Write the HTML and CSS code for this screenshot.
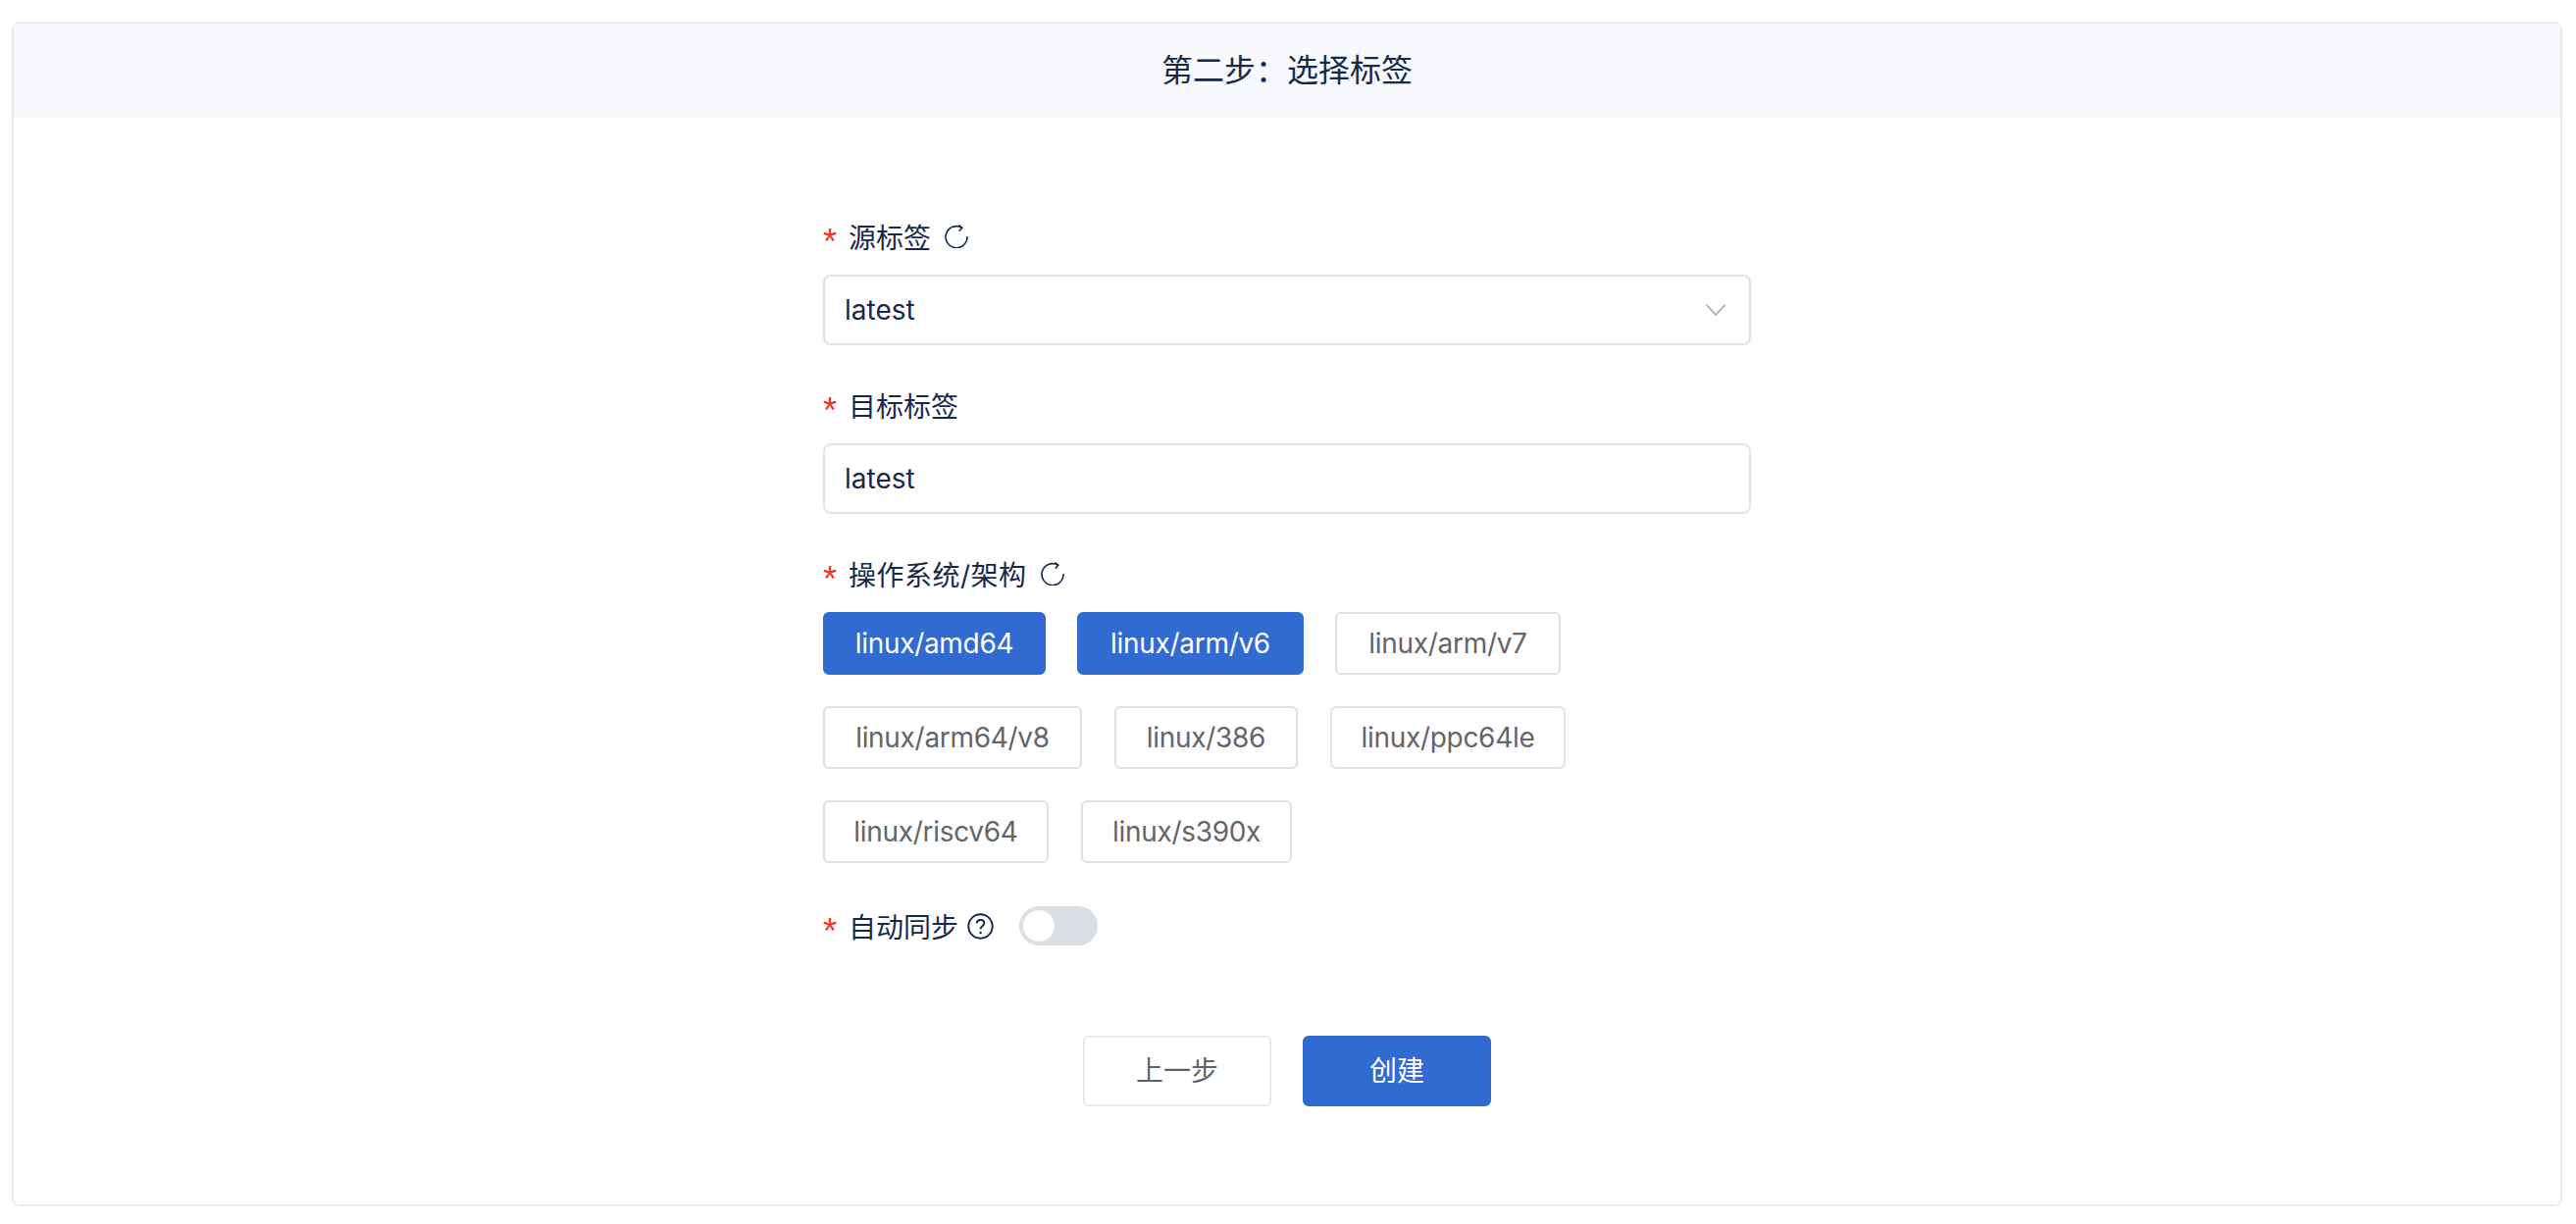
FILE: index.html
```html
<!DOCTYPE html>
<html lang="zh-CN">
<head>
  <meta charset="UTF-8">
  <title>选择标签</title>
  <link rel="stylesheet" href="styles.css">
</head>
<body>
  <div class="card">
    <div class="card-title">第二步：选择标签</div>

    <div class="form">
      <div class="form-label">
        <span class="required">*</span>
        <span>源标签</span>
        <svg class="refresh" viewBox="0 0 24 24"><path d="M17.6 3.2A11 11 0 1 0 23 12"/><path d="M14.2 .6l3.6 2.6-3 3.4"/></svg>
      </div>
      <div class="input select">
        <span>latest</span>
        <svg class="chevron" viewBox="0 0 20 12"><path d="M.5 .7L10 11 19.5 .7"/></svg>
      </div>

      <div class="form-label">
        <span class="required">*</span>
        <span>目标标签</span>
      </div>
      <div class="input">latest</div>

      <div class="form-label">
        <span class="required">*</span>
        <span class="label-wide">操作系统/架构</span>
        <svg class="refresh" viewBox="0 0 24 24"><path d="M17.6 3.2A11 11 0 1 0 23 12"/><path d="M14.2 .6l3.6 2.6-3 3.4"/></svg>
      </div>
      <div class="arch-list">
        <div class="arch-row row-1">
          <div class="arch active">linux/amd64</div>
          <div class="arch active">linux/arm/v6</div>
          <div class="arch">linux/arm/v7</div>
        </div>
        <div class="arch-row row-2">
          <div class="arch">linux/arm64/v8</div>
          <div class="arch">linux/386</div>
          <div class="arch">linux/ppc64le</div>
        </div>
        <div class="arch-row row-3">
          <div class="arch">linux/riscv64</div>
          <div class="arch">linux/s390x</div>
        </div>
      </div>

      <div class="sync-row">
        <span class="required">*</span>
        <span>自动同步</span>
        <svg class="help" viewBox="0 0 27 27"><circle cx="13.5" cy="13.5" r="12.2"/><path d="M9.8 10.6c0-2.2 1.6-3.6 3.8-3.6s3.7 1.3 3.7 3.3c0 3-3.7 2.9-3.7 6"/><circle class="dot" cx="13.6" cy="20" r="1.3"/></svg>
        <div class="switch"><div class="knob"></div></div>
      </div>

      <div class="actions">
        <div class="btn">上一步</div>
        <div class="btn primary">创建</div>
      </div>
    </div>
  </div>
</body>
</html>
```

FILE: styles.css
```css
* {
  box-sizing: border-box;
}

body {
  margin: 0;
  padding: 22px 14px 18px 12px;
  background: #fff;
  color: #14294b;
  font-family: Inter, "Noto Sans CJK SC", sans-serif;
  font-size: 28px;
}

.card {
  height: 1208px;
  border: 2px solid #e9ecf2;
  border-radius: 8px;
}

.card-title {
  height: 96px;
  line-height: 96px;
  text-align: center;
  font-size: 32px;
  background: #f7f9fd;
}

.form {
  width: 946px;
  margin: 0 auto;
  padding-top: 101px;
}

.form-label {
  display: flex;
  align-items: center;
  height: 40px;
  margin-bottom: 19px;
}

.label-wide {
  letter-spacing: 0.5px;
}

.required {
  width: 26px;
  padding-top: 11px;
  color: #f5332a;
  font-family: "Liberation Sans", sans-serif;
  font-size: 36px;
  line-height: 1;
}

.refresh {
  width: 24px;
  height: 24px;
  margin-left: 14px;
  fill: none;
  stroke: #14294b;
  stroke-width: 1.6;
}

.input {
  display: flex;
  align-items: center;
  justify-content: space-between;
  height: 72px;
  margin-bottom: 41px;
  padding: 0 24px 0 20px;
  border: 2px solid #e0e3ea;
  border-radius: 8px;
}

.chevron {
  width: 20px;
  height: 12px;
  fill: none;
  stroke: #a5a5ad;
  stroke-width: 1.5;
}

.arch-list {
  display: flex;
  flex-direction: column;
  gap: 32px;
}

.arch-row {
  display: grid;
  column-gap: 33px;
}

.row-1 {
  grid-template-columns: 227px 231px 230px;
  column-gap: 32px;
}

.row-2 {
  grid-template-columns: 264px 187px 240px;
}

.row-3 {
  grid-template-columns: 230px 215px;
}

.arch {
  height: 64px;
  line-height: 60px;
  text-align: center;
  border: 2px solid #dfe0e6;
  border-radius: 6px;
  color: #636569;
  letter-spacing: -0.3px;
}

.arch.active {
  border-color: #316bd2;
  background: #316bd2;
  color: #fff;
}

.sync-row {
  display: flex;
  align-items: center;
  height: 40px;
  margin-top: 44px;
}

.help {
  width: 27px;
  height: 27px;
  margin-left: 9px;
  fill: none;
  stroke: #14294b;
  stroke-width: 1.9;
}

.help .dot {
  fill: #14294b;
  stroke: none;
}

.switch {
  width: 80px;
  height: 40px;
  margin-left: 26px;
  padding: 4px;
  border-radius: 20px;
  background: #dcdee5;
}

.knob {
  width: 32px;
  height: 32px;
  border-radius: 50%;
  background: #fff;
}

.actions {
  display: flex;
  justify-content: center;
  gap: 32px;
  margin-top: 92px;
}

.btn {
  width: 192px;
  height: 72px;
  line-height: 68px;
  text-align: center;
  border: 2px solid #e9e9ec;
  border-radius: 6px;
  color: #5f6268;
}

.btn.primary {
  border-color: #316bd2;
  background: #316bd2;
  color: #fff;
}
```
